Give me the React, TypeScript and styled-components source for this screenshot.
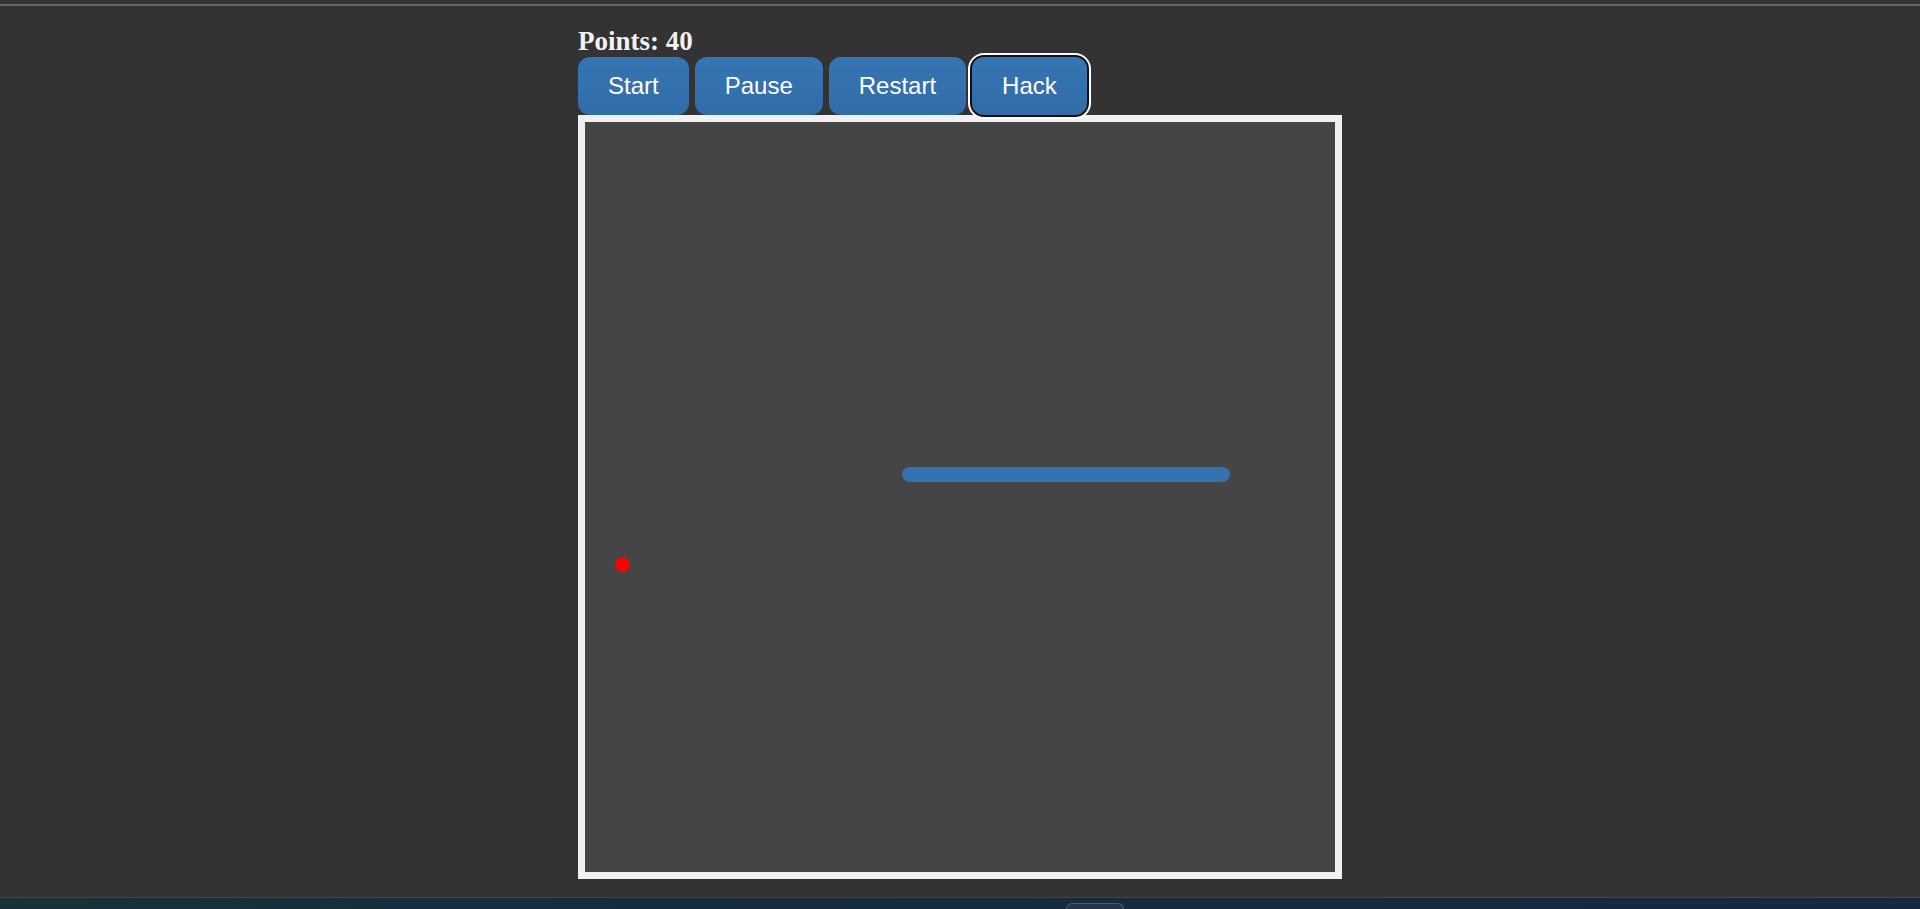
import styled, { createGlobalStyle } from 'styled-components';

const GlobalStyle = createGlobalStyle`
    html, body {
        margin: 0;
        padding: 0;
        background: #333333;
    }
    #root {
        min-height: 100vh;
        display: flex;
        flex-direction: column;
    }
`

const CELL = 15
const snake = { x: 317, y: 345, length: 328 }
const food = { x: 2 * CELL, y: 29 * CELL }

export default function App() {
    return (
        <>
            <GlobalStyle />
            <TopRule />
            <GameWrap>
                <Points>Points: 40</Points>
                <Controls>
                    <GameBtn>Start</GameBtn>
                    <GameBtn>Pause</GameBtn>
                    <GameBtn>Restart</GameBtn>
                    <GameBtn focused>Hack</GameBtn>
                </Controls>
                <Board>
                    <svg width="750" height="750" viewBox="0 0 750 750">
                        <rect x={snake.x} y={snake.y} width={snake.length} height={CELL} rx={7.5} fill="#3473b0" />
                        <circle cx={food.x + CELL / 2} cy={food.y + CELL / 2} r={CELL / 2} fill="#ff0000" />
                    </svg>
                </Board>
            </GameWrap>
            <Taskbar>
                <TaskItem />
            </Taskbar>
        </>
    )
}

const TopRule = styled.div`
    height: 2px;
    margin-top: 4px;
    background: #676767;
`

const GameWrap = styled.main`
    width: 764px;
    margin: 0 auto;
    padding-top: 20px;
`

const Points = styled.h2`
    margin: 0;
    font-family: "Liberation Serif", "Times New Roman", serif;
    font-size: 27px;
    line-height: 31px;
    font-weight: bold;
    color: #f2f2f2;
`

const Controls = styled.div`
    display: flex;
    gap: 6px;
`

const GameBtn = styled.button<{ focused?: boolean }>`
    font-family: "Liberation Sans", Arial, sans-serif;
    font-size: 24px;
    line-height: 28px;
    color: #ffffff;
    padding: 15px 30px;
    border: none;
    border-radius: 12px;
    background: linear-gradient(#3675b2, #316ca8);
    cursor: pointer;
    outline: ${p => (p.focused ? '2px solid #111111' : 'none')};
    box-shadow: ${p => (p.focused ? '0 0 0 4px #ffffff' : 'none')};
`

const Board = styled.div`
    width: 750px;
    height: 750px;
    border: 7px solid #f0f0f0;
    background: #454545;

    svg {
        display: block;
    }
`

const Taskbar = styled.footer`
    margin-top: auto;
    height: 11px;
    border-top: 1px solid #3b4854;
    background: linear-gradient(90deg, #193238 0%, #172b3f 35%, #162840 100%);
    display: flex;
    justify-content: center;
`

const TaskItem = styled.div`
    width: 56px;
    height: 6px;
    margin-top: 5px;
    margin-left: 270px;
    border-radius: 6px 6px 0 0;
    border: 1px solid #4a5a6c;
    border-bottom: none;
    background: #25364a;
`
